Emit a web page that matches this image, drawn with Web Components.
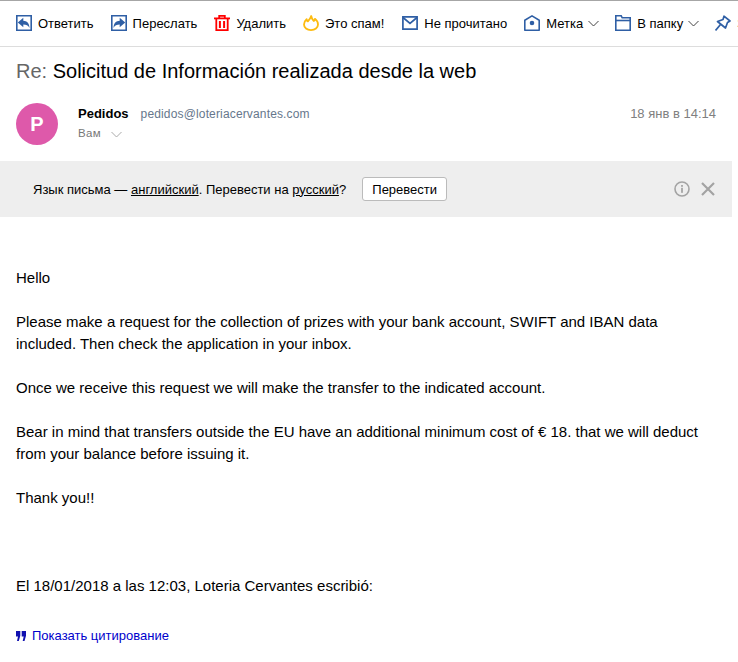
<!DOCTYPE html>
<html lang="ru">
<head>
<meta charset="UTF-8">
<title>Письмо</title>
<style>
  html, body { margin: 0; padding: 0; background: #fff; overflow: hidden; }
  body { width: 738px; height: 662px; font-family: "Liberation Sans", Arial, sans-serif; color: #000; }
</style>
</head>
<body>

<template id="tb-item-tpl">
  <style>
    :host { display: flex; align-items: center; flex: none; height: 16px; font-size: 13px; color: #000; white-space: nowrap; }
    .ico { width: 16px; height: 16px; margin-right: 6px; display: flex; align-items: center; }
    .arrow { display: none; margin-left: 5px; }
    :host([menu]) .arrow { display: block; }
    ::slotted(svg) { display: block; }
  </style>
  <span class="ico"><slot name="icon"></slot></span>
  <slot></slot>
  <svg class="arrow" width="11" height="7" viewBox="0 0 11 7" fill="none" stroke="#444" stroke-width="1"><path d="M.5 1l5 5 5-5"/></svg>
</template>

<template id="tool-bar-tpl">
  <style>
    :host { display: flex; box-sizing: border-box; height: 47px; padding: 14px 0 0 16px; border-top: 1px solid #a6a6a6; border-bottom: 1px solid #ddd; overflow: hidden; }
    ::slotted(tb-item) { margin-right: 17px; }
    ::slotted(tb-item.wide) { margin-right: 18px; }
    ::slotted(tb-item[menu]) { margin-right: 16px; }
  </style>
  <slot></slot>
</template>

<template id="mail-subject-tpl">
  <style>
    :host { display: block; padding: 13px 16px 0; height: 40px; box-sizing: border-box; font-size: 20px; line-height: 22px; color: #000; white-space: nowrap; }
    .re { color: #666; }
  </style>
  <span class="re">Re:</span> <slot></slot>
</template>

<template id="mail-head-tpl">
  <style>
    :host { display: flex; height: 74px; box-sizing: border-box; padding: 16px 22px 0 16px; }
    .ava { width: 42px; height: 42px; border-radius: 50%; background: #de59aa; color: #fff; font-size: 20px; font-weight: 700; display: flex; align-items: center; justify-content: center; flex: none; margin-right: 20px; }
    .who { flex: 1; padding-top: 2px; }
    .line1 { display: flex; align-items: baseline; height: 18px; line-height: 18px; }
    .name { font-size: 13px; font-weight: 700; color: #000; margin-right: 12px; }
    .mail { font-size: 12px; color: #66778c; letter-spacing: .15px; }
    .line2 { display: flex; align-items: center; margin-top: 2px; height: 16px; font-size: 11.5px; color: #777; letter-spacing: .4px; }
    .line2 svg { margin-left: 10px; margin-top: 2px; }
    .date { font-size: 13px; line-height: 18px; padding-top: 2px; color: #808080; white-space: nowrap; }
  </style>
  <div class="ava"><slot name="letter"></slot></div>
  <div class="who">
    <div class="line1"><span class="name"><slot name="name"></slot></span><span class="mail"><slot name="mail"></slot></span></div>
    <div class="line2"><slot name="to"></slot><svg width="11" height="7" viewBox="0 0 11 7" fill="none" stroke="#aaa"><path d="M.5 1l5 5 5-5"/></svg></div>
  </div>
  <div class="date"><slot name="date"></slot></div>
</template>

<template id="translate-bar-tpl">
  <style>
    :host { display: flex; align-items: center; width: 732px; height: 56px; box-sizing: border-box; padding: 0 17px 0 33px; background: #eee; font-size: 13px; color: #000; white-space: nowrap; }
    .msg { flex: 1; display: flex; align-items: center; }
    ::slotted(a) { color: #000; }
    button { font: inherit; font-size: 13px; color: #000; height: 24px; width: 85px; margin-left: 16px; padding: 0; background: #fff; border: 1px solid #bbb; border-radius: 3px; }
    .tools { display: flex; align-items: center; gap: 11px; }
    svg { display: block; }
  </style>
  <div class="msg"><span><slot></slot></span><button>Перевести</button></div>
  <div class="tools">
    <svg width="16" height="16" viewBox="0 0 16 16"><circle cx="8" cy="8" r="7" fill="none" stroke="#a3a3a3" stroke-width="1.6"/><rect x="7.1" y="6.8" width="1.8" height="5" fill="#a3a3a3"/><rect x="7.1" y="4" width="1.8" height="1.8" fill="#a3a3a3"/></svg>
    <svg width="14" height="14" viewBox="0 0 14 14" stroke="#a3a3a3" stroke-width="2.2"><path d="M1 1l12 12M13 1L1 13"/></svg>
  </div>
</template>

<template id="mail-body-tpl">
  <style>
    :host { display: block; padding: 50px 32px 0 16px; font-size: 15px; line-height: 22px; color: #000; }
    ::slotted(p) { margin: 0 0 22px; }
    ::slotted(p.gap) { margin-bottom: 66px; }
  </style>
  <slot></slot>
</template>

<template id="quote-link-tpl">
  <style>
    :host { display: flex; align-items: center; height: 16px; margin-top: 31px; font-size: 13px; color: #0000cc; }
    svg { display: block; margin-right: 6px; }
  </style>
  <svg width="10" height="10" viewBox="0 0 10 10" fill="#1111b0"><path d="M0 0h4.300v4.800L2.800 10H1l1-4.600H0zM5.700 0H10v4.800L8.500 10H6.700l1-4.600h-2z"/></svg>
  <slot></slot>
</template>

<tool-bar>
  <tb-item><svg slot="icon" width="16" height="16" viewBox="0 0 16 16"><path d="M.8.800h14.400v14.400H.8z" fill="none" stroke="#2f5fa5" stroke-width="1.600"/><path d="M1.800 7.500L7.300 2.800v2.900c3.600.1 6 2.400 6.200 7.300-1.400-2.900-3.200-3.600-6.200-3.600v2.900z" fill="#2f5fa5"/></svg>Ответить</tb-item>
  <tb-item><svg slot="icon" width="16" height="16" viewBox="0 0 16 16"><path d="M.8.800h14.400v14.400H.8z" fill="none" stroke="#2f5fa5" stroke-width="1.600"/><path d="M14.200 7.500L8.700 2.800v2.900c-3.600.1-6 2.400-6.200 7.300 1.400-2.900 3.200-3.600 6.200-3.600v2.900z" fill="#2f5fa5"/></svg>Переслать</tb-item>
  <tb-item><svg slot="icon" width="16" height="16" viewBox="0 0 16 16" fill="none" stroke="#f00" stroke-width="1.800"><path d="M0 3.400h16"/><path d="M5.200 3V.9h5.600V3"/><path d="M2.300 3.400v11.700h11.400V3.400"/><path d="M5.900 6v7M10.100 6v7" stroke-width="2"/></svg>Удалить</tb-item>
  <tb-item class="wide"><svg slot="icon" width="16" height="16" viewBox="0 0 16 16" fill="none" stroke="#fdbb10" stroke-width="1.800" stroke-linejoin="round"><path d="M8.200 1c.4 2.700 1.500 3.800 2.600 5 .6-.5 1-1.200 1.100-2.200 1.700 1.300 3.100 3.200 3.100 5.600 0 3.300-3 5.700-7 5.700s-7-2.400-7-5.700c0-2.100 1-3.800 2.600-5.200.2 1 .6 1.700 1.300 2.200C6.400 4.800 7.600 3 8.200 1z"/></svg>Это спам!</tb-item>
  <tb-item><svg slot="icon" width="16" height="14" viewBox="0 0 16 14" fill="none" stroke="#2f5fa5" stroke-width="1.700"><path d="M.9.900h14.200v12.200H.9z"/><path d="M1 1.500l7 6 7-6"/></svg>Не прочитано</tb-item>
  <tb-item menu><svg slot="icon" width="16" height="16" viewBox="0 0 16 16" fill="none" stroke="#2f5fa5" stroke-width="1.600" stroke-linejoin="round"><path d="M8 .9l7.200 4.400v9.900H.8V5.300z"/><circle cx="8" cy="8" r="1.500" fill="#2f5fa5"/></svg>Метка</tb-item>
  <tb-item menu><svg slot="icon" width="16" height="16" viewBox="0 0 16 16" fill="none" stroke="#2f5fa5" stroke-width="1.600"><path d="M.8.800h5.400l1 2h8v12.400H.8z"/><path d="M.8 5.500h14.400"/></svg>В папку</tb-item>
  <tb-item><svg slot="icon" width="16" height="16" viewBox="0 0 16 16" fill="none" stroke="#2f5fa5" stroke-width="1.700" stroke-linejoin="round"><path d="M9 1.200l6 4.800-2.500 1.500-2 5.500-8-6.500 5.500-2z"/><path d="M5.500 9.500L.5 15.500"/></svg>Закрепить</tb-item>
</tool-bar>

<mail-subject>Solicitud de Información realizada desde la web</mail-subject>

<mail-head>
  <span slot="letter">P</span>
  <span slot="name">Pedidos</span>
  <span slot="mail">pedidos@loteriacervantes.com</span>
  <span slot="to">Вам</span>
  <span slot="date">18 янв в 14:14</span>
</mail-head>

<translate-bar>Язык письма — <a href="#">английский</a>. Перевести на <a href="#">русский</a>?</translate-bar>

<mail-body>
  <p>Hello</p>
  <p>Please make a request for the collection of prizes with your bank account, SWIFT and IBAN data included. Then check the application in your inbox.</p>
  <p>Once we receive this request we will make the transfer to the indicated account.</p>
  <p>Bear in mind that transfers outside the EU have an additional minimum cost of € 18. that we will deduct from your balance before issuing it.</p>
  <p class="gap">Thank you!!</p>
  <p>El 18/01/2018 a las 12:03, Loteria Cervantes escribió:</p>
  <quote-link>Показать цитирование</quote-link>
</mail-body>

<script>
  function simple(name, tplId) {
    customElements.define(name, class extends HTMLElement {
      constructor() {
        super();
        this.attachShadow({mode: 'open'}).appendChild(document.getElementById(tplId).content.cloneNode(true));
      }
    });
  }
  simple('tb-item', 'tb-item-tpl');
  simple('tool-bar', 'tool-bar-tpl');
  simple('mail-subject', 'mail-subject-tpl');
  simple('mail-head', 'mail-head-tpl');
  simple('translate-bar', 'translate-bar-tpl');
  simple('mail-body', 'mail-body-tpl');
  simple('quote-link', 'quote-link-tpl');
</script>
</body>
</html>
